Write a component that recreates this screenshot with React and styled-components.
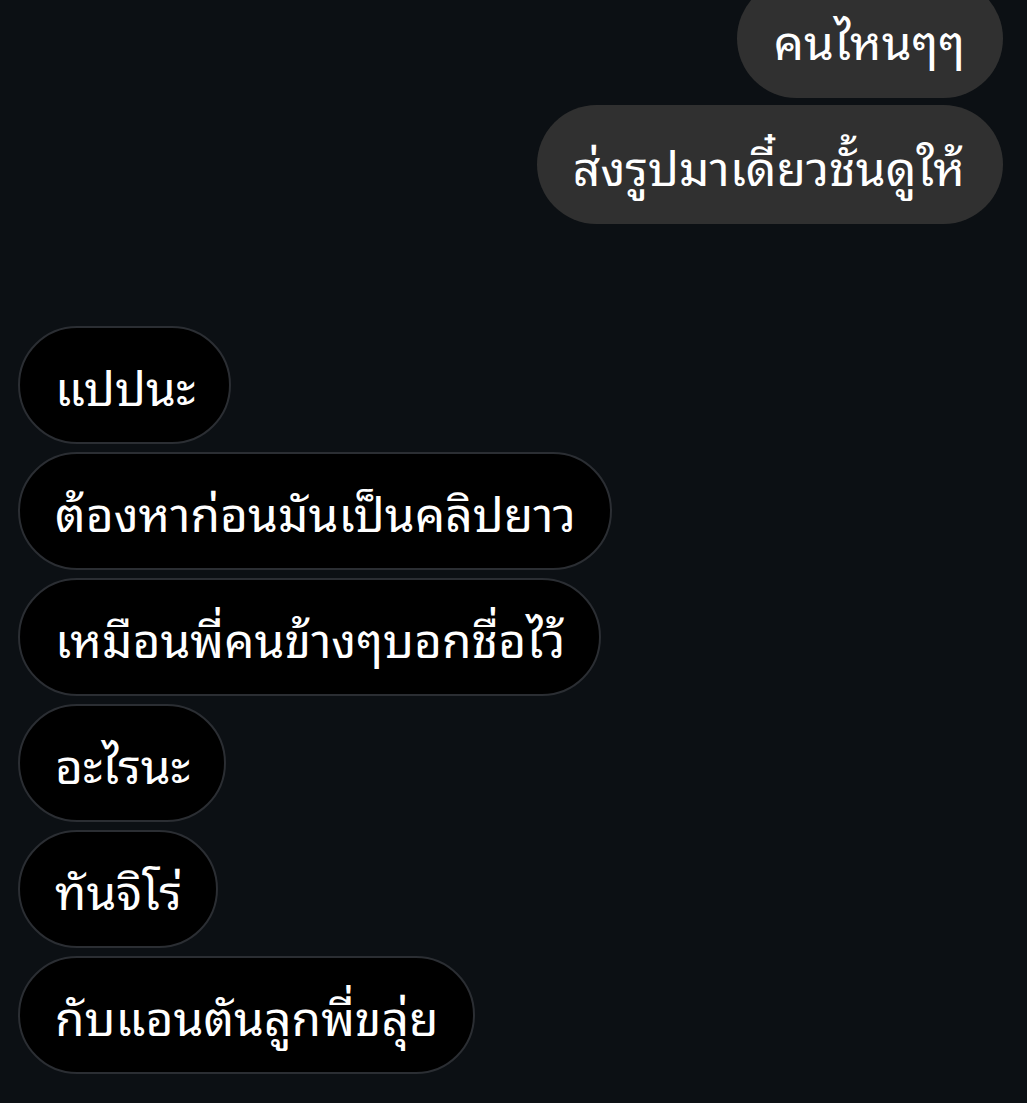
import React from "react";
import styled, { createGlobalStyle } from "styled-components";

const Global = createGlobalStyle`
  html, body { margin: 0; padding: 0; background: #0c1014; }
  body { font-family: "Noto Sans Thai Looped", "Noto Sans", sans-serif; }
`;

const Page = styled.div`
  width: 1027px;
  height: 1103px;
  overflow: hidden;
  background: #0c1014;
  box-sizing: border-box;
  padding: 0 24px 0 18px;
  display: flex;
  flex-direction: column;
`;

const Group = styled.div`
  display: flex;
  flex-direction: column;
  align-items: ${(p) => (p.$mine ? "flex-end" : "flex-start")};
  gap: ${(p) => (p.$mine ? "7px" : "8px")};
  margin-top: ${(p) => p.$offset || "0"};
`;

const Bubble = styled.div`
  box-sizing: border-box;
  height: ${(p) => (p.$mine ? "119px" : "118px")};
  display: flex;
  align-items: center;
  padding: 0 ${(p) => (p.$mine ? "38px" : "34px")} 0 ${(p) => (p.$mine ? "36px" : "35px")};
  border-radius: 60px;
  background: ${(p) => (p.$mine ? "#303030" : "#000000")};
  border: ${(p) => (p.$mine ? "none" : "2px solid #2b2e33")};
  color: #ffffff;
  font-family: "Noto Sans Thai Looped", "Noto Sans", sans-serif;
  font-size: 48px;
  line-height: 1;
  white-space: nowrap;
`;

const mine = ["คนไหนๆๆ", "ส่งรูปมาเดี๋ยวชั้นดูให้"];
const theirs = [
  "แปปนะ",
  "ต้องหาก่อนมันเป็นคลิปยาว",
  "เหมือนพี่คนข้างๆบอกชื่อไว้",
  "อะไรนะ",
  "ทันจิโร่",
  "กับแอนตันลูกพี่ขลุ่ย",
];

export default function App() {
  return (
    <Page>
      <Global />
      <Group $mine $offset="-21px">
        {mine.map((t) => (
          <Bubble key={t} $mine>
            {t}
          </Bubble>
        ))}
      </Group>
      <Group $offset="102px">
        {theirs.map((t) => (
          <Bubble key={t}>{t}</Bubble>
        ))}
      </Group>
    </Page>
  );
}
